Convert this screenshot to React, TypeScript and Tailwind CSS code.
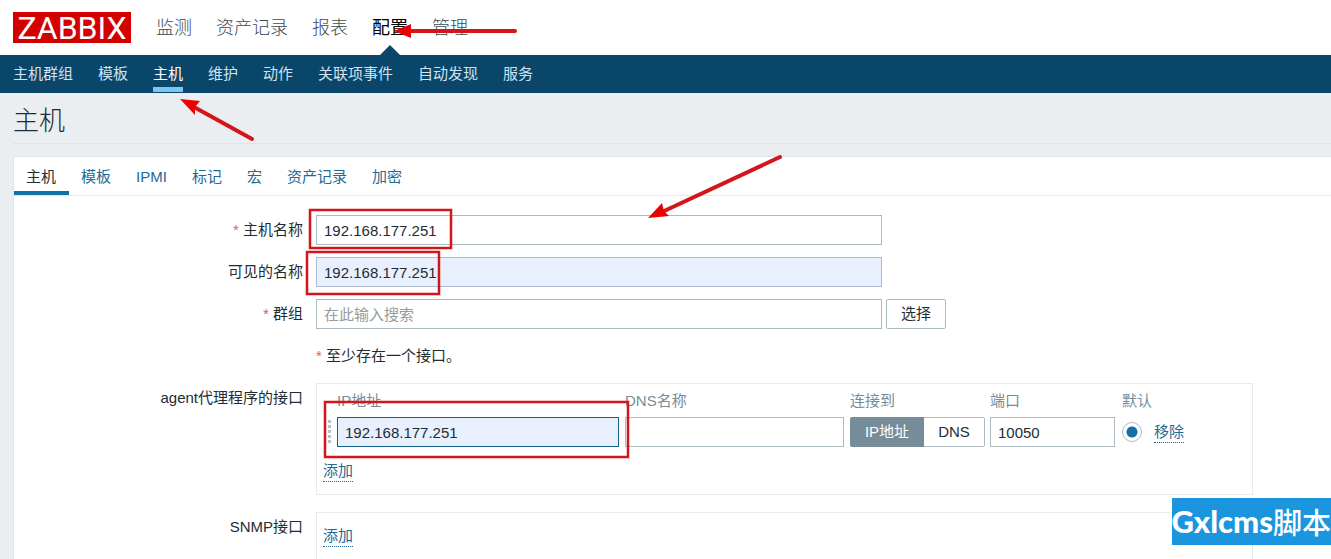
import { FC, ReactNode } from "react";
import clsx from "clsx";

const mainMenu = ["监测", "资产记录", "报表", "配置", "管理"];
const subMenu = ["主机群组", "模板", "主机", "维护", "动作", "关联项事件", "自动发现", "服务"];
const tabs = ["主机", "模板", "IPMI", "标记", "宏", "资产记录", "加密"];

const inputClass =
  "h-[30px] rounded-none border border-[#acbbc2] bg-white px-[7px] text-[15px] text-[#1f2c33] outline-none placeholder:text-[#9a9a9a]";

interface RowProps {
  label?: string;
  htmlFor?: string;
  required?: boolean;
  children: ReactNode;
}

const Row: FC<RowProps> = ({ label, htmlFor, required, children }) => {
  return (
    <div className="flex items-start gap-[13px]">
      <label htmlFor={htmlFor} className="w-[289px] shrink-0 text-right leading-[30px]">
        {required && <span className="text-[#e45959]">* </span>}
        {label}
      </label>
      {children}
    </div>
  );
};

const AddButton: FC = () => {
  return (
    <button
      type="button"
      className="block border-b border-dotted border-[#1f6a96] leading-5 text-[#1f6a96]"
    >
      添加
    </button>
  );
};

const Header: FC = () => {
  return (
    <header>
      <div className="flex h-[55px] items-center bg-white pl-[13px]">
        <a
          href="#"
          className="flex h-[31px] w-[118px] items-center justify-center bg-[#d40000] font-['Roboto','Liberation_Sans',sans-serif] text-[32px] leading-none text-white"
        >
          ZABBIX
        </a>
        <nav className="ml-[25px] flex h-full gap-6 text-lg font-light text-[#3c4a52]">
          {mainMenu.map((item) => (
            <a key={item} href="#" className="relative flex items-center">
              <span className={clsx(item === "配置" && "font-normal text-black")}>{item}</span>
              {item === "配置" && (
                <svg
                  className="absolute bottom-0 left-1/2 h-[10px] w-5 -translate-x-1/2"
                  viewBox="0 0 20 10"
                >
                  <path d="M0 10 10 0l10 10z" fill="#0a466a" />
                </svg>
              )}
            </a>
          ))}
        </nav>
      </div>
      <nav className="flex h-[38px] gap-[25px] bg-[#0a466a] pl-[13px] text-[#cfe3f0]">
        {subMenu.map((item) => (
          <a
            key={item}
            href="#"
            className={clsx(
              "h-[37px] border-b-[5px] leading-[37px]",
              item === "主机" ? "border-[#7dc4f0] text-white" : "border-transparent",
            )}
          >
            {item}
          </a>
        ))}
      </nav>
    </header>
  );
};

const AgentInterfaces: FC = () => {
  return (
    <div className="w-full max-w-[937px] border border-[#e6eaec] pt-[7px] pb-3 pl-[6px]">
      <table className="w-full table-fixed text-left">
        <colgroup>
          <col className="w-[14px]" />
          <col className="w-[288px]" />
          <col className="w-[225px]" />
          <col className="w-[140px]" />
          <col className="w-[132px]" />
          <col className="w-8" />
          <col />
        </colgroup>
        <thead>
          <tr className="leading-5 text-[#768d99]">
            <th />
            <th className="pb-[6px] font-normal">IP地址</th>
            <th className="pb-[6px] font-normal">DNS名称</th>
            <th className="pb-[6px] font-normal">连接到</th>
            <th className="pb-[6px] font-normal">端口</th>
            <th colSpan={2} className="pb-[6px] font-normal">
              默认
            </th>
          </tr>
        </thead>
        <tbody>
          <tr>
            <td className="pl-[5px]">
              <svg width="3" height="24" viewBox="0 0 3 24" fill="#b5bfc4" className="block">
                <path d="M0 0h3v3H0zM0 5h3v3H0zM0 10h3v3H0zM0 15h3v3H0zM0 20h3v3H0z" />
              </svg>
            </td>
            <td>
              <input
                aria-label="IP地址"
                defaultValue="192.168.177.251"
                className="block h-[30px] w-[282px] border border-[#0f6487] bg-[#e8f0fe] px-[7px] text-[#1f2c33] outline-none"
              />
            </td>
            <td>
              <input aria-label="DNS名称" className={clsx(inputClass, "block w-[219px]")} />
            </td>
            <td>
              <div className="flex h-[30px] w-[135px]">
                <button type="button" className="w-[74px] rounded-l-xs bg-[#768d99] text-white">
                  IP地址
                </button>
                <button
                  type="button"
                  className="flex-1 rounded-r-xs border border-l-0 border-[#acbbc2]"
                >
                  DNS
                </button>
              </div>
            </td>
            <td>
              <input
                aria-label="端口"
                defaultValue="10050"
                className={clsx(inputClass, "block w-[125px]")}
              />
            </td>
            <td>
              <input
                type="radio"
                name="default"
                aria-label="默认"
                defaultChecked
                className="block size-5 appearance-none rounded-full border border-[#acbbc2] bg-white bg-[radial-gradient(circle,#0f6fa6_5px,transparent_6px)]"
              />
            </td>
            <td>
              <button
                type="button"
                className="block border-b border-dotted border-[#1f6a96] leading-5 text-[#1f6a96]"
              >
                移除
              </button>
            </td>
          </tr>
        </tbody>
      </table>
      <div className="mt-[14px]">
        <AddButton />
      </div>
    </div>
  );
};

const Annotations: FC = () => {
  return (
    <svg
      className="pointer-events-none absolute top-0 left-0 h-[559px] w-[900px]"
      viewBox="0 0 900 559"
      fill="none"
      stroke="#d3161b"
      strokeWidth="2.5"
    >
      <rect x="310" y="210" width="141" height="38" />
      <rect x="307" y="252" width="132" height="42" />
      <rect x="325" y="402" width="303" height="55" />
      <g strokeWidth="4" strokeLinecap="round">
        <path d="M410 31h105" />
        <path d="M194 107l58 32" />
        <path d="M662 212l118-55" />
      </g>
      <g fill="#ee0000" stroke="none">
        <path d="M394 31l17-7v14z" />
        <path d="M180 99l20 2-5 6 0 8z" />
        <path d="M648 218l14-15 2 8 5 5z" />
      </g>
    </svg>
  );
};

export default function App() {
  return (
    <div className="relative flex h-screen flex-col overflow-hidden bg-[#ebeef0] font-['Liberation_Sans','Noto_Sans_CJK_SC',sans-serif] text-[15px] text-[#1f2c33]">
      <Header />
      <main className="flex flex-1 flex-col pl-[13px]">
        <h1 className="h-[51px] border-b border-[#dfe4e7] text-[26px] leading-[57px] font-light">
          主机
        </h1>
        <form className="mt-3 flex-1 border-t border-l border-[#dfe4e7] bg-white">
          <div className="flex h-[39px] border-b border-[#e6eaec]">
            {tabs.map((tab, i) => (
              <a
                key={tab}
                href="#"
                className={clsx(
                  "border-b-4 pr-[13px] pl-3 leading-[39px]",
                  i === 0 ? "border-[#0f73a5]" : "border-transparent text-[#1f6a96]",
                )}
              >
                {tab}
              </a>
            ))}
          </div>
          <div className="flex flex-col gap-3 pt-[19px]">
            <Row label="主机名称" htmlFor="host" required>
              <input
                id="host"
                defaultValue="192.168.177.251"
                className={clsx(inputClass, "w-[566px]")}
              />
            </Row>
            <Row label="可见的名称" htmlFor="visible-name">
              <input
                id="visible-name"
                defaultValue="192.168.177.251"
                className="h-[30px] w-[566px] border border-[#acbbd2] bg-[#e8f0fe] px-[7px] outline-none"
              />
            </Row>
            <Row label="群组" htmlFor="groups" required>
              <div className="flex gap-1">
                <input
                  id="groups"
                  placeholder="在此输入搜索"
                  className={clsx(inputClass, "w-[566px]")}
                />
                <button
                  type="button"
                  className="h-[30px] w-[60px] rounded-xs border border-[#acbbc2]"
                >
                  选择
                </button>
              </div>
            </Row>
            <Row>
              <p className="leading-[30px]">
                <span className="text-[#e45959]">* </span>至少存在一个接口。
              </p>
            </Row>
            <Row label="agent代理程序的接口">
              <AgentInterfaces />
            </Row>
            <div className="pt-[5px]">
              <Row label="SNMP接口">
                <div className="w-full max-w-[937px] border border-[#e6eaec] py-[13px] pl-[6px]">
                  <AddButton />
                </div>
              </Row>
            </div>
          </div>
        </form>
      </main>
      <Annotations />
      <div className="absolute right-0 bottom-[14px] flex h-[47px] items-center bg-[#1b95dd] whitespace-nowrap text-white">
        <span className="font-['Lato',sans-serif] text-[31px] leading-none font-black">Gxlcms</span>
        <span className="font-['Noto_Sans_CJK_SC',sans-serif] text-[29px] leading-none font-medium">
          脚本
        </span>
      </div>
    </div>
  );
}
